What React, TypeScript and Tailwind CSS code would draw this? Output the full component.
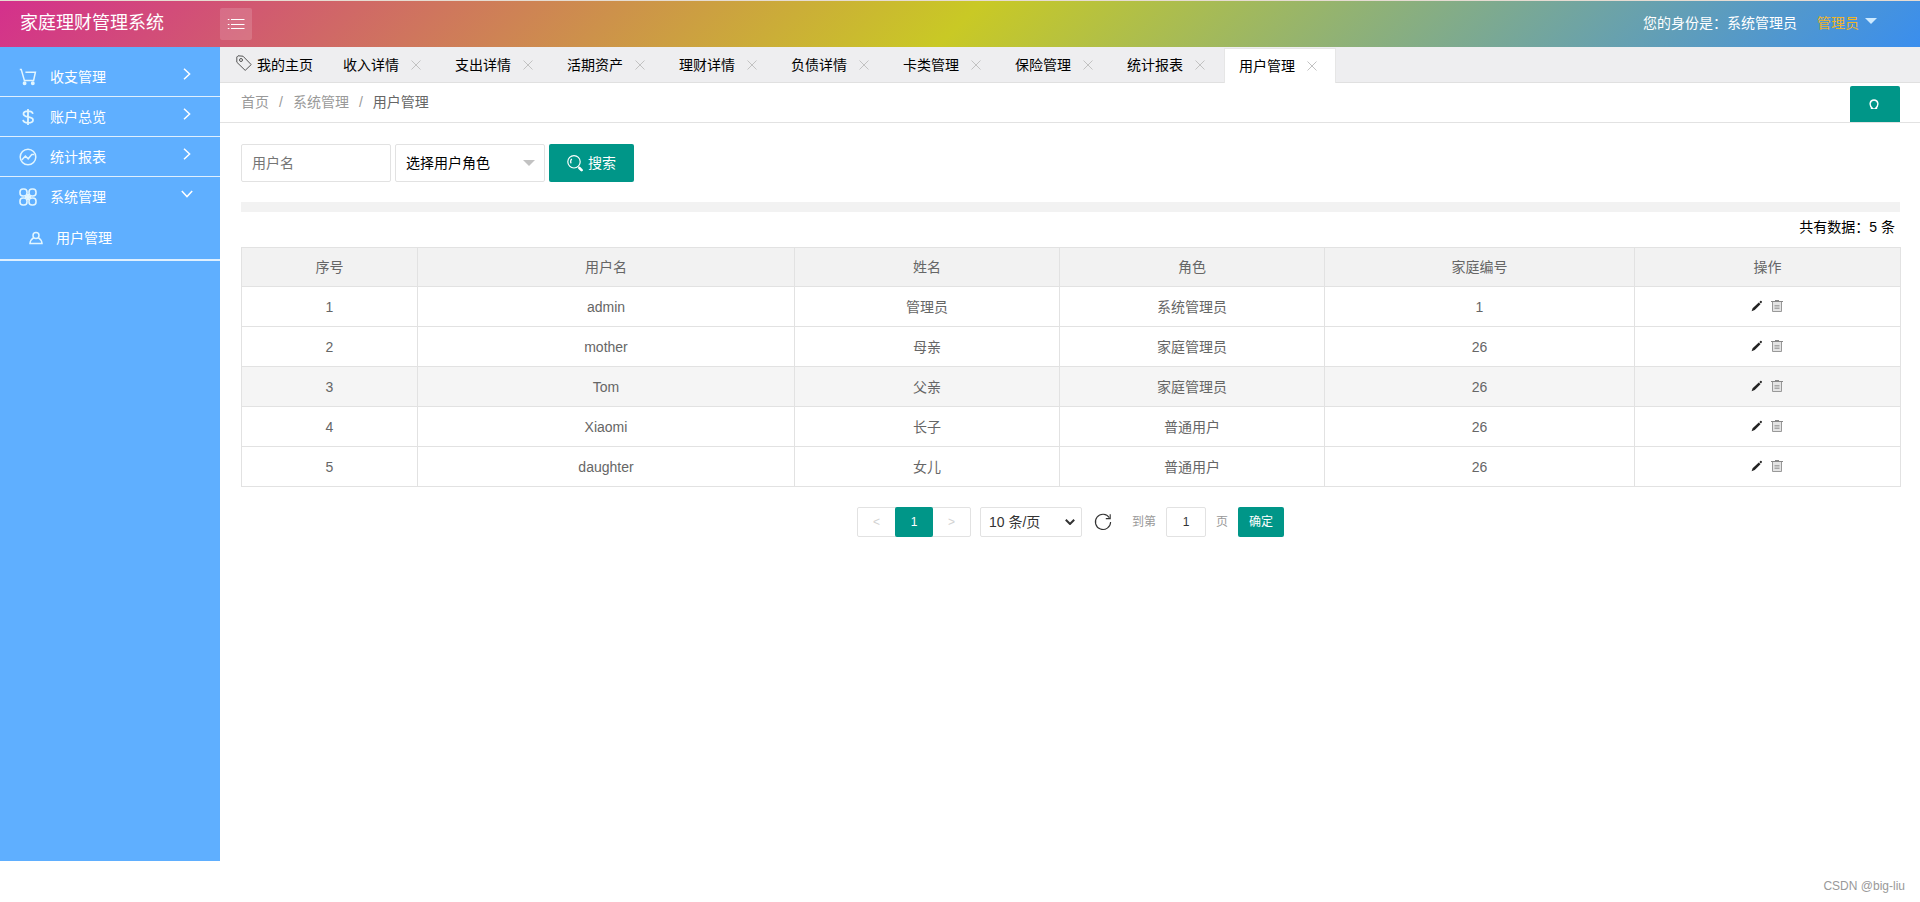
import React, { useState } from 'react';

type IconProps = { className?: string };

const CartIcon: React.FC<IconProps> = ({ className }) => (
  <svg viewBox="0 0 18 18" className={className} fill="none" stroke="currentColor" strokeWidth="1.5">
    <path d="M.8 1.4h1.4l3.2 11h9.2l1.8-8.2H6.4" />
    <circle cx="5.6" cy="15.2" r="1.2" fill="currentColor" />
    <circle cx="13.8" cy="15.2" r="1.2" fill="currentColor" />
  </svg>
);

const DollarIcon: React.FC<IconProps> = ({ className }) => (
  <svg viewBox="0 0 18 18" className={className} fill="none" stroke="currentColor" strokeWidth="1.8">
    <path d="M9 1v16M13.8 5.8C13.5 4 11.7 3.2 9 3.2S4.5 4.3 4.5 6c0 4 9.5 1.900 9.5 5.900 0 1.900-1.900 2.900-4.900 2.900-2.800 0-4.700-1-5-3" />
  </svg>
);

const ChartIcon: React.FC<IconProps> = ({ className }) => (
  <svg viewBox="0 0 18 18" className={className} fill="none" stroke="currentColor" strokeWidth="1.5">
    <circle cx="9" cy="9" r="7.8" />
    <path d="M2.8 12l3.6-4 2.8 2.8 3.6-4.200H15" />
  </svg>
);

const CloverIcon: React.FC<IconProps> = ({ className }) => (
  <svg viewBox="0 0 18 18" className={className} fill="none" stroke="currentColor" strokeWidth="1.6">
    <rect x="1" y="1" width="7" height="7" rx="3" />
    <rect x="10" y="1" width="7" height="7" rx="3" />
    <rect x="1" y="10" width="7" height="7" rx="3" />
    <rect x="10" y="10" width="7" height="7" rx="3" />
    <path d="M6 9h6M9 6v6" strokeWidth="2" />
  </svg>
);

const UserIcon: React.FC<IconProps> = ({ className }) => (
  <svg viewBox="0 0 14 14" className={className} fill="none" stroke="currentColor" strokeWidth="1.5">
    <circle cx="7" cy="4.4" r="3" />
    <path d="M4.8 6.6C2.6 8 1.2 9.6 1 12.4h12c-.2-2.8-1.6-4.400-3.8-5.8" />
  </svg>
);

const TagIcon: React.FC<IconProps> = ({ className }) => (
  <svg viewBox="0 0 16 16" className={className} fill="none" stroke="currentColor" strokeWidth="1">
    <path d="M.8 2v5.2l8.4 8.2 6-5.800L7 1.2 2 .8z" strokeLinejoin="round" />
    <circle cx="5" cy="5" r="1.5" />
  </svg>
);

const ListIcon: React.FC<IconProps> = ({ className }) => (
  <svg viewBox="0 0 18 12" className={className} stroke="currentColor" strokeWidth="1">
    <path d="M4 1.5h13.5M4 6.5h13.5M4 10.5h13.5M.8 1.5h1.6M.8 6.5h1.6M.8 10.5h1.6" />
  </svg>
);

const SearchIcon: React.FC<IconProps> = ({ className }) => (
  <svg viewBox="0 0 16 18" className={className} fill="none" stroke="currentColor" strokeWidth="1.2">
    <circle cx="7" cy="7.8" r="6.2" />
    <path d="M4.8 4.8C3.6 6 3.4 7.8 4 9.4" />
    <path d="M12.4 14l2.2 2.2" strokeWidth="2.6" strokeLinecap="round" />
  </svg>
);

const ReloadIcon: React.FC<IconProps> = ({ className }) => (
  <svg viewBox="0 0 18 18" className={className} fill="none" stroke="currentColor" strokeWidth="1.1">
    <path d="M15.4 4.8A7.6 7.6 0 1 0 16.6 9" />
    <path d="M16.2 1.2v4.4h-4.4" />
  </svg>
);

const PencilIcon: React.FC<IconProps> = ({ className }) => (
  <svg viewBox="0 0 12 12" className={className} fill="currentColor">
    <path d="M.6 11.2l1-3 6.2-5.6 1.7 1.7-5.8 5.7zM8.4 2l1-1c.7-.6 2 .6 1.4 1.4l-.9 1z" />
  </svg>
);

const TrashIcon: React.FC<IconProps> = ({ className }) => (
  <svg viewBox="0 0 12 12" className={className} fill="none" stroke="currentColor" strokeWidth="1">
    <path d="M0 1.5h12M4 .5h4" />
    <path d="M1.5 2v9.5h9V2" fill="#e4e4e4" stroke="#999" />
    <path d="M3.5 5.5h5M3.5 7h5M3.5 8.5h5" stroke="#a8a8a8" />
  </svg>
);

const CloseIcon: React.FC<IconProps> = ({ className }) => (
  <svg viewBox="0 0 10 10" className={className} fill="none" stroke="currentColor" strokeWidth="1">
    <path d="M.5.5l9 9M9.5.5l-9 9" />
  </svg>
);

const ChevronIcon: React.FC<IconProps> = ({ className }) => (
  <svg viewBox="0 0 12 12" className={className} fill="none" stroke="currentColor" strokeWidth="1.5">
    <path d="M3 .8L8.6 6 3 11.2" />
  </svg>
);

const menus = [
  { label: '收支管理', Icon: CartIcon },
  { label: '账户总览', Icon: DollarIcon },
  { label: '统计报表', Icon: ChartIcon },
];

const tabs = ['收入详情', '支出详情', '活期资产', '理财详情', '负债详情', '卡类管理', '保险管理', '统计报表', '用户管理'];

const users = [
  { id: 1, username: 'admin', name: '管理员', role: '系统管理员', family: 1 },
  { id: 2, username: 'mother', name: '母亲', role: '家庭管理员', family: 26 },
  { id: 3, username: 'Tom', name: '父亲', role: '家庭管理员', family: 26 },
  { id: 4, username: 'Xiaomi', name: '长子', role: '普通用户', family: 26 },
  { id: 5, username: 'daughter', name: '女儿', role: '普通用户', family: 26 },
];

const Header: React.FC = () => (
  <header className="flex h-[47px] items-center border-t border-[#e6dcd2] bg-[linear-gradient(135deg,#d4308c,#c9c925_50%,#3a8eee)] pr-[43px] text-white">
    <h1 className="w-[220px] shrink-0 pb-0.5 pl-5 text-lg leading-none">家庭理财管理系统</h1>
    <button type="button" aria-label="菜单" className="flex size-8 items-center justify-center rounded-xs bg-white/15">
      <ListIcon className="h-3 w-[18px]" />
    </button>
    <div className="ml-auto flex items-center gap-5 pb-0.5 text-sm">
      <span>您的身份是：系统管理员</span>
      <button type="button" className="flex items-center gap-1.5 text-[#f0b429]">
        管理员
        <span className="mb-1 border-x-6 border-t-6 border-x-transparent border-t-[#cdeaff]" />
      </button>
    </div>
  </header>
);

const Sidebar: React.FC = () => (
  <nav className="mb-[41px] w-[220px] shrink-0 bg-[#5fafff] pt-[10px] text-sm text-white">
    {menus.map(({ label, Icon }) => (
      <a key={label} href="#" className="flex h-10 items-center border-b border-[#dff0ff] pr-[27px] pl-[19px]">
        <Icon className="size-[18px] text-[#e2f6ff]" />
        <span className="ml-[13px]">{label}</span>
        <ChevronIcon className="mb-1.5 ml-auto size-3" />
      </a>
    ))}
    <div className="border-b-2 border-[#dff0ff]">
      <a href="#" className="flex h-10 items-center pr-[27px] pl-[19px]">
        <CloverIcon className="size-[18px] text-[#e2f6ff]" />
        <span className="ml-[13px]">系统管理</span>
        <ChevronIcon className="mb-1.5 ml-auto size-3 rotate-90" />
      </a>
      <a href="#" className="flex h-[42px] items-center pl-[29px]">
        <UserIcon className="size-[14px] text-[#e2f6ff]" />
        <span className="ml-[13px]">用户管理</span>
      </a>
    </div>
  </nav>
);

const TabBar: React.FC = () => (
  <div className="flex h-9 items-end border-b border-[#e0e0e0] bg-[#eeeef0] pl-px text-sm text-black">
    <a href="#" className="flex h-[34px] items-center gap-[5px] px-[15px]">
      <TagIcon className="mb-1 size-4 text-[#555]" />
      我的主页
    </a>
    {tabs.map((tab) => (
      <div
        key={tab}
        className={
          tab === '用户管理'
            ? '-mb-px flex h-[35px] items-center gap-2 border border-b-0 border-[#e6e6e6] bg-white px-[14px]'
            : 'flex h-[34px] items-center gap-2 px-[15px]'
        }
      >
        <a href="#">{tab}</a>
        <button type="button" aria-label={'关闭' + tab} className="flex size-[18px] items-center justify-center text-[#c2c2c2]">
          <CloseIcon className="size-[10px]" />
        </button>
      </div>
    ))}
  </div>
);

const Pagination: React.FC = () => {
  const [page, setPage] = useState('1');

  return (
    <div className="mt-5 flex h-[30px] items-center justify-center text-xs text-[#333]">
      <div className="flex h-full rounded-xs border border-[#e2e2e2]">
        <button type="button" className="w-[37px] text-[#d2d2d2]">&lt;</button>
        <span className="-my-px flex w-[38px] items-center justify-center rounded-xs bg-[#009688] text-white">1</span>
        <button type="button" className="w-[37px] text-[#d2d2d2]">&gt;</button>
      </div>
      <div className="relative ml-[9px] h-full">
        <select aria-label="每页条数" className="h-full w-[102px] appearance-none rounded-xs border border-[#e2e2e2] bg-white pl-2 text-sm">
          <option>10 条/页</option>
          <option>20 条/页</option>
        </select>
        <svg viewBox="0 0 10 6" className="pointer-events-none absolute top-3 right-[7px] h-[6px] w-[10px]" fill="none" stroke="#333" strokeWidth="2">
          <path d="M.8.8L5 5 9.2.8" />
        </svg>
      </div>
      <button type="button" aria-label="刷新" className="ml-3">
        <ReloadIcon className="size-[18px]" />
      </button>
      <label htmlFor="page" className="ml-5 text-[#999]">到第</label>
      <input
        id="page"
        value={page}
        onChange={(e) => setPage(e.target.value)}
        className="mx-[10px] h-full w-10 rounded-xs border border-[#e2e2e2] text-center"
      />
      <span className="text-[#999]">页</span>
      <button type="button" className="ml-[10px] h-full rounded-xs bg-[#009688] px-[11px] text-white">确定</button>
    </div>
  );
};

const UserTable: React.FC = () => (
  <table className="w-full table-fixed border-collapse border border-[#e2e2e2] text-center text-sm text-[#666]">
    <colgroup>
      <col className="w-[176px]" />
      <col className="w-[377px]" />
      <col className="w-[265px]" />
      <col className="w-[265px]" />
      <col className="w-[310px]" />
      <col className="w-[266px]" />
    </colgroup>
    <thead className="bg-[#f2f2f2]">
      <tr className="h-[39px]">
        {['序号', '用户名', '姓名', '角色', '家庭编号', '操作'].map((title) => (
          <th key={title} className="border border-[#e2e2e2] p-0 font-normal">{title}</th>
        ))}
      </tr>
    </thead>
    <tbody>
      {users.map((user) => (
        <tr key={user.id} className={user.id === 3 ? 'h-10 bg-[#f5f5f5]' : 'h-10'}>
          <td className="border border-[#e2e2e2] p-0">{user.id}</td>
          <td className="border border-[#e2e2e2] p-0">{user.username}</td>
          <td className="border border-[#e2e2e2] p-0">{user.name}</td>
          <td className="border border-[#e2e2e2] p-0">{user.role}</td>
          <td className="border border-[#e2e2e2] p-0">{user.family}</td>
          <td className="border border-[#e2e2e2] p-0">
            <div className="flex items-center justify-center gap-2 pr-0.5 pb-0.5">
              <button type="button" aria-label="编辑" className="text-[#222]">
                <PencilIcon className="size-3" />
              </button>
              <button type="button" aria-label="删除" className="text-[#888]">
                <TrashIcon className="size-3" />
              </button>
            </div>
          </td>
        </tr>
      ))}
    </tbody>
  </table>
);

const App: React.FC = () => {
  const [keyword, setKeyword] = useState('');

  return (
    <div className="flex min-h-screen flex-col bg-white font-['Liberation_Sans','Noto_Sans_CJK_SC',sans-serif]">
      <Header />
      <div className="flex flex-1">
        <Sidebar />
        <div className="flex min-w-0 flex-1 flex-col">
          <TabBar />
          <div className="flex h-10 items-end border-b border-[#e2e2e2] pr-5 pl-[21px]">
            <div className="flex h-full items-center gap-[10px] pb-0.5 text-sm text-[#999]">
              <a href="#">首页</a>
              <span>/</span>
              <a href="#">系统管理</a>
              <span>/</span>
              <a href="#" className="text-[#666]">用户管理</a>
            </div>
            <button type="button" aria-label="刷新" className="ml-auto flex h-9 w-[50px] items-center justify-center rounded-t-xs bg-[#009688] pr-0.5 text-white">
              <svg viewBox="0 0 10 10" className="size-[10px]" fill="none" stroke="currentColor" strokeWidth="1.4">
                <path d="M1.8 9.2H3.4C-.2 6.5.6 1 5 1s5.2 5.5 1.6 8.200h1.6" />
              </svg>
            </button>
          </div>
          <main className="pt-[21px] pr-5 pl-[21px]">
            <form className="flex items-center gap-1 text-sm" onSubmit={(e) => e.preventDefault()}>
              <input
                type="text"
                aria-label="用户名"
                placeholder="用户名"
                value={keyword}
                onChange={(e) => setKeyword(e.target.value)}
                className="h-[38px] w-[150px] rounded-xs border border-[#e2e2e2] px-[10px] placeholder:text-[#757575]"
              />
              <div className="relative">
                <select aria-label="用户角色" className="h-[38px] w-[150px] appearance-none rounded-xs border border-[#e2e2e2] bg-white px-[10px] text-black">
                  <option>选择用户角色</option>
                  <option>系统管理员</option>
                  <option>家庭管理员</option>
                  <option>普通用户</option>
                </select>
                <span className="pointer-events-none absolute top-4 right-[10px] border-x-6 border-t-6 border-x-transparent border-t-[#c2c2c2]" />
              </div>
              <button type="submit" className="flex h-[38px] items-center gap-[5px] rounded-xs bg-[#009688] px-[18px] text-white">
                <SearchIcon className="h-[18px] w-4" />
                搜索
              </button>
            </form>
            <hr className="mt-5 h-[10px] border-0 bg-[#f2f2f2]" />
            <p className="pt-[5px] pr-[5px] pb-[10px] text-right text-sm text-black">共有数据：5 条</p>
            <UserTable />
            <Pagination />
          </main>
          <footer className="mt-auto pr-[15px] pb-2 text-right text-xs text-[#999]">CSDN @big-liu</footer>
        </div>
      </div>
    </div>
  );
};

export default App;
